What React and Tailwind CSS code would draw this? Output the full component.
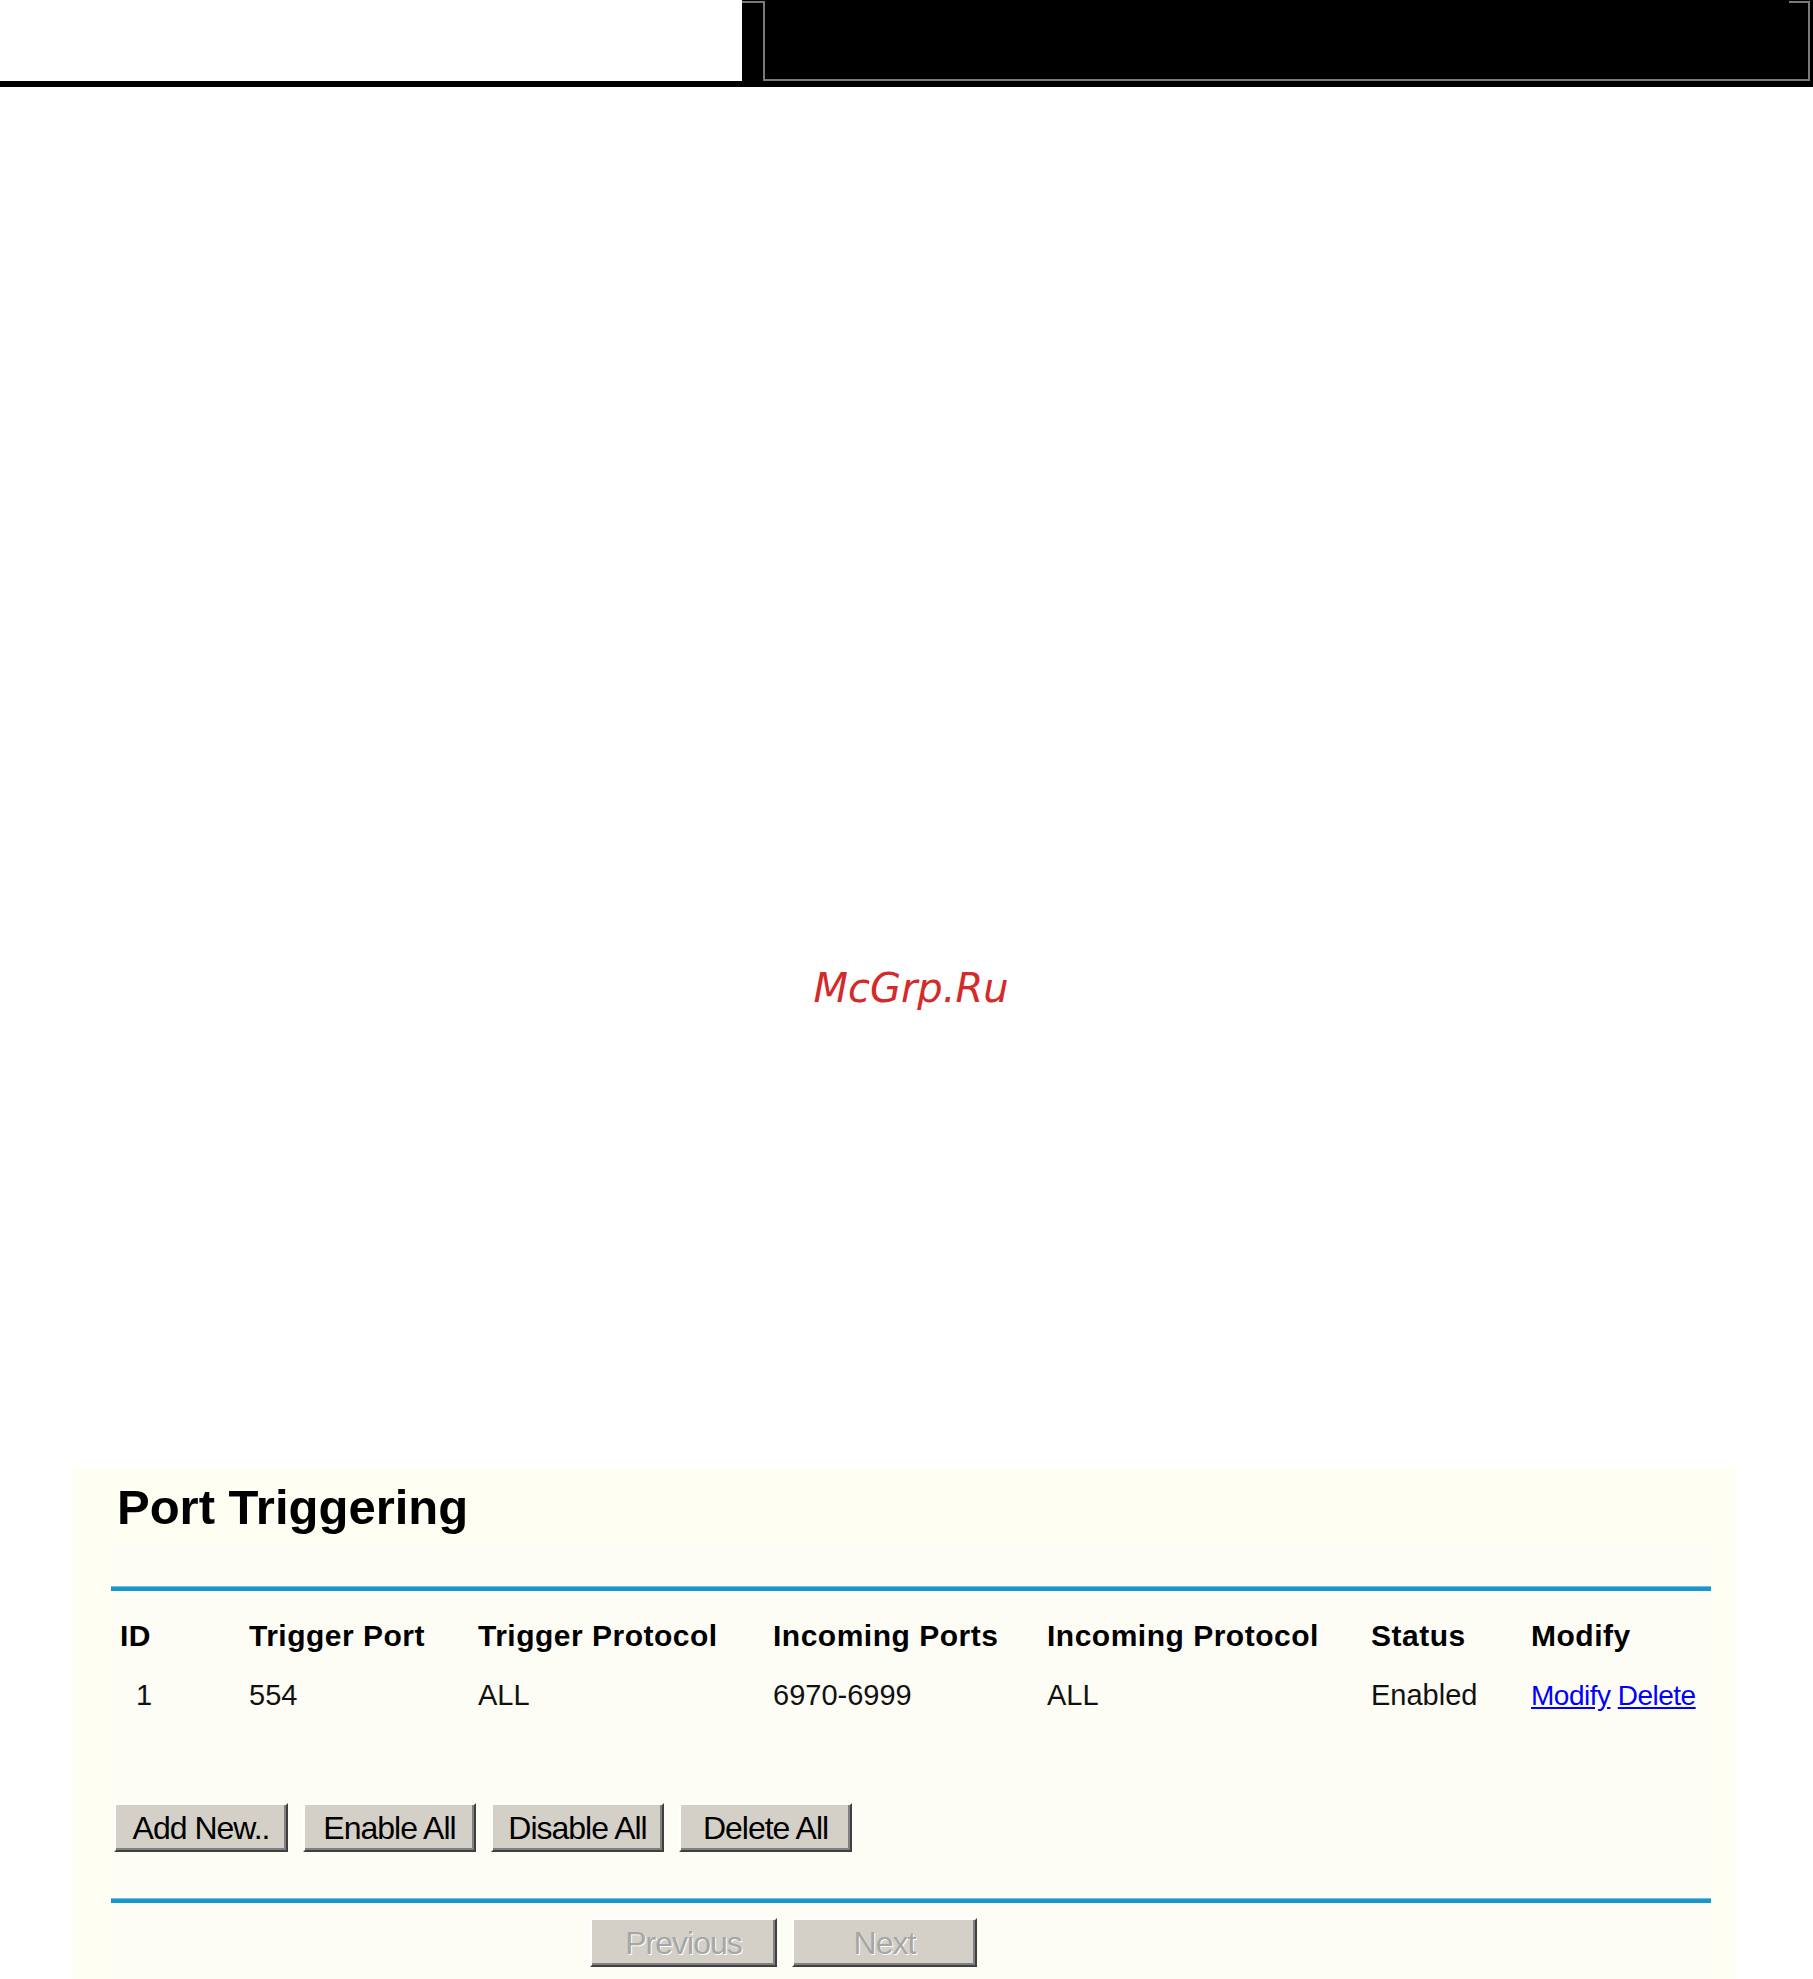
const cols = "grid grid-cols-[129px_229px_295px_274px_324px_160px_1fr] pl-[9px]";

function BlueLine() {
  return <div className="h-[5px] bg-[#1896c7] border-t border-[#6ec2e4]" />;
}

function WinButton({ label, width, disabled }) {
  return (
    <button
      className={`h-[49px] ${width} bg-[#d4d0c8] border-2 border-t-white border-l-white border-b-[#404040] border-r-[#404040] shadow-[inset_-2px_-2px_0_#808080] text-[32px] leading-none tracking-[-1px] ${
        disabled ? "text-[#a6a6a6] [text-shadow:1px_1px_0_#ffffff]" : "text-black"
      }`}
    >
      {label}
    </button>
  );
}

export default function App() {
  return (
    <div className="w-[1813px] h-[1979px] overflow-hidden bg-white font-['Liberation_Sans',Arial,sans-serif]">
      {/* top banner */}
      <div className="flex h-[81px]">
        <div className="w-[742px]" />
        <div className="flex-1 bg-black pt-px pr-[3px]">
          <div className="flex h-full">
            <div className="w-[21px] h-[2px] bg-[#7a7a7a]" />
            <div className="flex-1 flex justify-end border-l-2 border-r-2 border-b-2 border-[#7a7a7a]">
              <div className="w-[19px] h-[2px] bg-[#7a7a7a]" />
            </div>
          </div>
        </div>
      </div>
      <div className="h-[6px] bg-black" />

      {/* watermark */}
      <div className="h-[1381px] pt-[881px] pl-[9px] text-center">
        <span className="font-['DejaVu_Sans',sans-serif] italic text-[40px] leading-[40px] text-[#d42a2a]">
          McGrp.Ru
        </span>
      </div>

      {/* panel */}
      <div className="ml-[73px] w-[1663px] h-[511px] bg-[#fefef2] pt-[15px]">
        <h1 className="pl-[44px] text-[49px] leading-[49px] font-bold text-black">
          Port Triggering
        </h1>
        <div className="mt-[13px] ml-[38px] w-[1600px] h-[434px] bg-[#fdfdf5] pt-[41px]">
          <BlueLine />
          <div className={`${cols} mt-[30px] text-[30px] leading-[30px] font-bold tracking-[0.5px] text-black`}>
            <div>ID</div>
            <div>Trigger Port</div>
            <div>Trigger Protocol</div>
            <div>Incoming Ports</div>
            <div>Incoming Protocol</div>
            <div>Status</div>
            <div>Modify</div>
          </div>
          <div className={`${cols} mt-[30px] text-[29px] leading-[29px] text-[#111]`}>
            <div className="pl-[16px]">1</div>
            <div>554</div>
            <div>ALL</div>
            <div>6970-6999</div>
            <div>ALL</div>
            <div>Enabled</div>
            <div className="whitespace-nowrap text-[28px] tracking-[-0.5px]">
              <a href="#" className="text-[#0000ff] underline">Modify</a>{" "}
              <a href="#" className="text-[#0000ff] underline">Delete</a>
            </div>
          </div>
          <div className="mt-[93px] pl-[3px] flex gap-[15px]">
            <WinButton label="Add New.." width="w-[174px]" />
            <WinButton label="Enable All" width="w-[173px]" />
            <WinButton label="Disable All" width="w-[173px]" />
            <WinButton label="Delete All" width="w-[173px]" />
          </div>
          <div className="mt-[46px]">
            <BlueLine />
          </div>
          <div className="mt-[15px] pl-[479px] flex gap-[15px]">
            <WinButton label="Previous" width="w-[187px]" disabled />
            <WinButton label="Next" width="w-[185px]" disabled />
          </div>
        </div>
      </div>
    </div>
  );
}
